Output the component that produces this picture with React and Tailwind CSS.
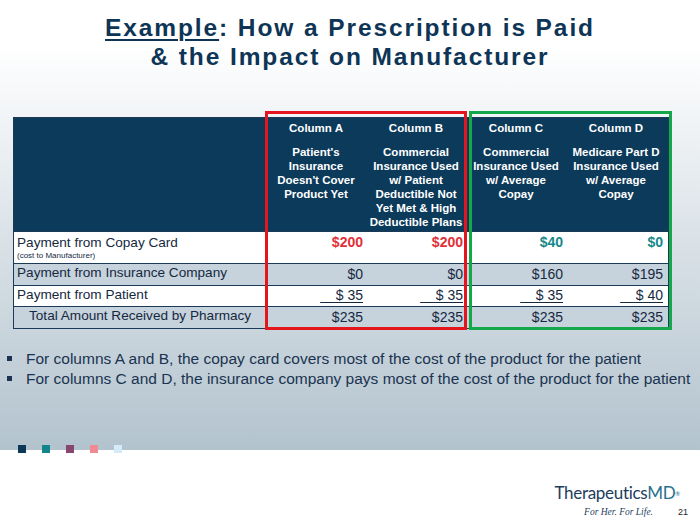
import React from "react";

const navy="text-[#0e3556]";

const columns=[
{key:"A",lines:["Patient's","Insurance","Doesn't Cover","Product Yet"]},
{key:"B",lines:["Commercial","Insurance Used","w/ Patient","Deductible Not","Yet Met & High","Deductible Plans"]},
{key:"C",lines:["Commercial","Insurance Used","w/ Average","Copay"]},
{key:"D",lines:["Medicare Part D","Insurance Used","w/ Average","Copay"]}
];

function Underlined({value}){
return(
<span className="underline decoration-1 underline-offset-2 whitespace-pre">{"    "+value}</span>
);
}

function Row({label,sub,values,shade,indent,tall}){
return(
<div className={`flex border-t border-[#1b3a57] ${shade?"bg-[#c6d2dc]":"bg-white"} ${tall?"h-[32px]":"h-[21.5px]"}`}>
<div className={`w-[252px] flex flex-col justify-start ${indent?"pl-[15px]":"pl-[3px]"} ${tall?"pt-[2px]":"justify-center"}`}>
<div className="text-[13.6px] leading-[17px] text-[#15293f]">{label}</div>
{sub&&<div className="text-[8px] leading-[9px] text-[#15293f]">{sub}</div>}
</div>
{values.map((v,i)=>(
<div key={i} className={`w-[100px] flex justify-end pr-[3px] ${tall?"pt-[2px] items-start":"items-center"} text-[14px] leading-[17px] text-[#15293f]`}>
{v}
</div>
))}
</div>
);
}

export default function App(){
return(
<div className="relative w-[700px] h-[524px] overflow-hidden bg-white" style={{fontFamily:"'Liberation Sans', Arial, sans-serif"}}>

<div className="h-[450px] bg-gradient-to-b from-white from-[10%] to-[#b3c3ce] flex flex-col">

<h1 className={`pt-[13px] text-center font-bold text-[24.5px] leading-[29px] tracking-[1.9px] ${navy}`}>
<span className="underline decoration-2 underline-offset-[3px]">Example</span>: How a Prescription is Paid
<br/>
&amp; the Impact on Manufacturer
</h1>

<div className="relative mt-[46px] ml-[13px] w-[656px]">

<div className="border border-[#1b3a57]">

<div className="flex bg-[#0c3a5b] h-[113px] text-white font-bold">
<div className="w-[252px]"></div>
{columns.map(c=>(
<div key={c.key} className="w-[100px] flex flex-col items-center pt-[3px] text-[11.5px] leading-[14px] text-center">
<div>Column {c.key}</div>
<div className="mt-[10px]">
{c.lines.map(l=>(
<div key={l} className="whitespace-nowrap">{l}</div>
))}
</div>
</div>
))}
</div>

<Row
tall
label="Payment from Copay Card"
sub="(cost to Manufacturer)"
values={[
<span className="font-bold text-[#e03039]">$200</span>,
<span className="font-bold text-[#e03039]">$200</span>,
<span className="font-bold text-[#15888a]">$40</span>,
<span className="font-bold text-[#15888a]">$0</span>
]}
/>

<Row
shade
label="Payment from Insurance Company"
values={["$0","$0","$160","$195"]}
/>

<Row
label="Payment from Patient"
values={[
<Underlined value="$ 35"/>,
<Underlined value="$ 35"/>,
<Underlined value="$ 35"/>,
<Underlined value="$ 40"/>
]}
/>

<Row
shade
indent
label="Total Amount Received by Pharmacy"
values={["$235","$235","$235","$235"]}
/>

</div>

<div className="absolute left-[252px] -top-[6px] w-[202px] h-[219px] border-[3px] border-[#e3161e] pointer-events-none"></div>

<div className="absolute left-[456px] -top-[6px] w-[203px] h-[219px] border-[3px] border-[#14a84b] pointer-events-none"></div>

</div>

<ul className="mt-[20px] ml-[7px] text-[15.5px] leading-[20px] text-[#1a3350]">
<li className="flex items-center whitespace-nowrap">
<span className="w-[5px] h-[5px] bg-[#1a3350] mr-[14px]"></span>
For columns A and B, the copay card covers most of the cost of the product for the patient
</li>
<li className="flex items-center whitespace-nowrap">
<span className="w-[5px] h-[5px] bg-[#1a3350] mr-[14px]"></span>
For columns C and D, the insurance company pays most of the cost of the product for the patient
</li>
</ul>

</div>

<div className="absolute left-[18px] top-[445px] flex gap-[16px]">
<span className="w-[8px] h-[8px] bg-[#0d3757]"></span>
<span className="w-[8px] h-[8px] bg-[#13868c]"></span>
<span className="w-[8px] h-[8px] bg-[#86466f]"></span>
<span className="w-[8px] h-[8px] bg-[#f08a93]"></span>
<span className="w-[8px] h-[8px] bg-[#d6ebfa]"></span>
</div>

<div className="flex flex-col items-end pr-[12px] pt-[33px]">
<div className="mr-[8px] text-[17px] leading-[20px] text-[#1c3d5c] tracking-[-0.3px]" style={{fontFamily:"'Lato', 'Open Sans', sans-serif"}}>
Therapeutics<span className="text-[#2a6f8e]">MD</span><sup className="text-[6px] text-[#2a6f8e]">®</sup>
</div>
<div className="flex items-end mt-[3px]">
<span className="italic text-[9.5px] leading-[12px] text-[#1c3d5c]" style={{fontFamily:"'Liberation Serif', serif"}}>For Her. For Life.</span>
<span className="ml-[25px] text-[9px] leading-[11px] text-[#222]">21</span>
</div>
</div>

</div>
);
}
